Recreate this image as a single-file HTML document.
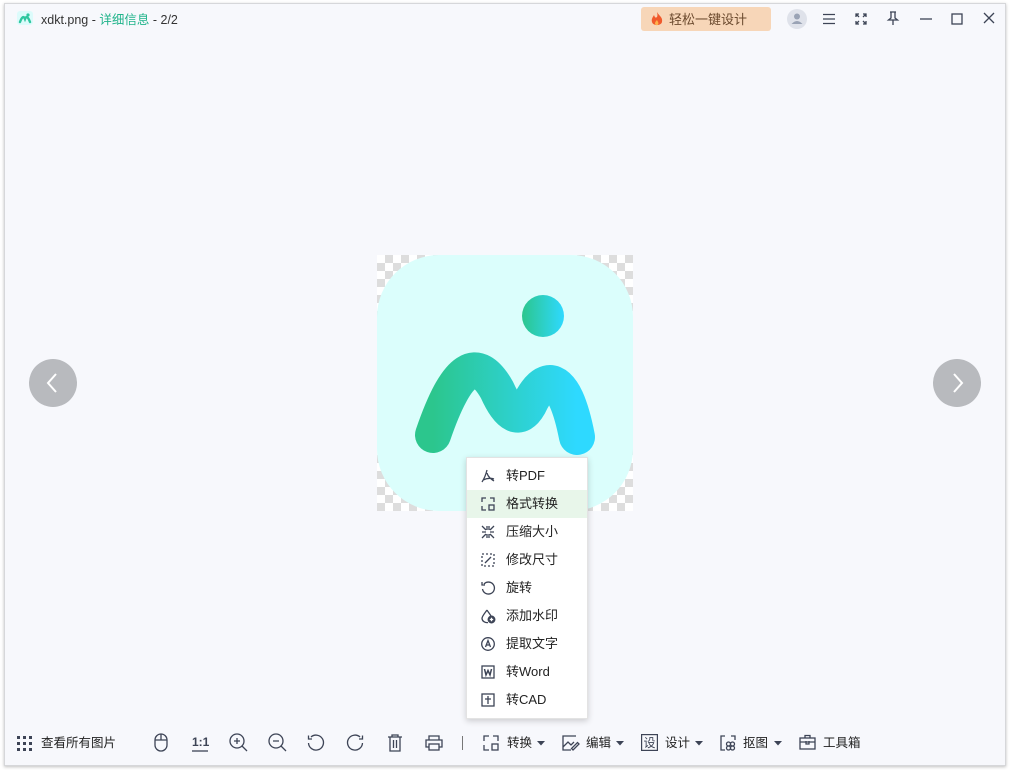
<!DOCTYPE html>
<html><head><meta charset="utf-8"><style>
*{margin:0;padding:0;box-sizing:border-box}
body{width:1010px;height:770px;background:#fff;font-family:"Liberation Sans","Noto Sans CJK SC",sans-serif;position:relative;overflow:hidden;color:#333}
#win{position:absolute;left:4px;top:3px;width:1002px;height:763px;background:#f7f8fc;border:1px solid #d6d7da;box-shadow:0 1px 3px rgba(0,0,0,.25)}
.a{position:absolute}
.t{font-size:13px;white-space:nowrap}
svg{position:absolute;overflow:visible}
.ic{stroke:#3d4456;fill:none;stroke-width:1.3}
.mi{position:absolute;left:0;width:120px;height:28px;font-size:13px;color:#222}
.mi span{position:absolute;left:39px;top:3px}
.mi svg{left:14px;top:7px}
.bt{top:732px;color:#222;font-size:12.5px}
</style></head><body>
<div id="win"></div>
<!-- title -->
<svg style="left:17px;top:11px" width="16" height="14" viewBox="0 0 16 14"><rect width="16" height="14" rx="3" fill="#dcfbfb"/><path d="M3 11 Q6 3 8 8 Q10 3 13 11" stroke="#2fc7a0" stroke-width="2.4" fill="none" stroke-linecap="round"/><circle cx="11" cy="4" r="1.6" fill="#2fc7a0"/></svg>
<div class="a t" style="left:41px;top:9px;color:#333;font-size:12.5px">xdkt.png - <span style="color:#1fb38a">详细信息</span> - 2/2</div>
<div class="a" style="left:641px;top:7px;width:130px;height:24px;background:#f7d6b8;border-radius:3px"></div>
<svg style="left:650px;top:11px" width="14" height="16" viewBox="0 0 14 16"><path d="M7 1 C9 5 13 6 12 11 C11 15 3 15 2 11 C1 8 3 6 4 4 C5 7 6 7 7 6 C8 4 7 2 7 1Z" fill="#f05a2c"/><path d="M7 9 C8 11 9 12 8 13.5 C7 15 5 14 5 12.5 C5 11 6 10 7 9Z" fill="#ffb14a"/></svg>
<div class="a t" style="left:669px;top:9px;color:#6b4a2e;font-size:13px">轻松一键设计</div>
<svg style="left:787px;top:9px" width="20" height="20" viewBox="0 0 20 20"><circle cx="10" cy="10" r="10" fill="#dfe2ea"/><circle cx="10" cy="7.5" r="3" fill="#9aa3b5"/><path d="M4.5 15 Q10 9 15.5 15Z" fill="#9aa3b5"/></svg>
<svg style="left:822px;top:13px" width="14" height="12" class="ic"><path d="M1 1.5H13M1 6H13M1 10.5H13"/></svg>
<svg style="left:855px;top:13px" width="12" height="12" class="ic"><path d="M1 4V1H4M8 1H11V4M11 8V11H8M4 11H1V8M1 1L4 4M11 1L8 4M11 11L8 8M1 11L4 8"/></svg>
<svg style="left:887px;top:11px" width="12" height="15" class="ic"><path d="M3 1H9M4 1V7L1.5 9H10.5L8 7V1M6 9V14"/></svg>
<svg style="left:920px;top:18px" width="12" height="2" class="ic"><path d="M0 1H12"/></svg>
<svg style="left:951px;top:13px" width="12" height="12" class="ic"><rect x="1" y="1" width="10" height="10"/></svg>
<svg style="left:983px;top:12px" width="12" height="12" class="ic"><path d="M1 1L11 11M11 1L1 11"/></svg>
<!-- nav arrows -->
<div class="a" style="left:29px;top:359px;width:48px;height:48px;border-radius:50%;background:#b8babe"></div>
<svg style="left:45px;top:372px" width="14" height="22"><path d="M11 2L3 11L11 20" stroke="#fff" stroke-width="2" fill="none"/></svg>
<div class="a" style="left:933px;top:359px;width:48px;height:48px;border-radius:50%;background:#b8babe"></div>
<svg style="left:951px;top:372px" width="14" height="22"><path d="M3 2L11 11L3 20" stroke="#fff" stroke-width="2" fill="none"/></svg>
<!-- image -->
<div class="a" style="left:377px;top:255px;width:256px;height:256px;background-color:#fff;background-image:linear-gradient(45deg,#ddd 25%,transparent 25%,transparent 75%,#ddd 75%),linear-gradient(45deg,#ddd 25%,transparent 25%,transparent 75%,#ddd 75%);background-size:16px 16px;background-position:0 0,8px 8px"></div>
<svg style="left:377px;top:255px" width="256" height="256" viewBox="0 0 256 256">
<defs><linearGradient id="g" x1="0" x2="1"><stop offset="0" stop-color="#2cc68d"/><stop offset="1" stop-color="#2ed9ff"/></linearGradient></defs>
<rect x="0" y="0" width="256" height="256" rx="62" fill="#dbfefc"/>
<circle cx="166" cy="61" r="21" fill="url(#g)"/>
<path d="M56 180 C80 110 100 100 120 135 Q138 175 152 150 C167 118 187 115 200 182" stroke="url(#g)" stroke-width="36" fill="none" stroke-linecap="round" stroke-linejoin="round"/>
</svg>
<!-- menu -->
<div class="a" style="left:466px;top:457px;width:122px;height:262px;background:#fff;border:1px solid #e3e3e3;box-shadow:0 2px 6px rgba(0,0,0,.18)">
<div class="mi" style="top:4px"><svg width="14" height="14" class="ic"><path d="M6 1C5 5 3 10 1 13M6 4C7 8 10 10 13 12M2 11C6 9 10 9 13 10"/></svg><span>转PDF</span></div>
<div class="mi" style="top:32px;background:#e8f6ea"><svg width="14" height="14" class="ic"><path d="M1 5V1H5M1 9V13H5M9 1H13V5"/><rect x="8" y="8" width="5" height="5"/></svg><span>格式转换</span></div>
<div class="mi" style="top:60px"><svg width="14" height="14" class="ic"><path d="M1 1L5 5M13 1L9 5M1 13L5 9M13 13L9 9M6 1V5M8 1V5M6 9V13M8 9V13M1 7H5M9 7H13"/></svg><span>压缩大小</span></div>
<div class="mi" style="top:88px"><svg width="14" height="14" class="ic"><rect x="1" y="1" width="12" height="12" stroke-dasharray="2 2"/><path d="M4 10L10 4"/></svg><span>修改尺寸</span></div>
<div class="mi" style="top:116px"><svg width="14" height="14" class="ic"><path d="M3 3A6 6 0 1 1 1.5 8M1 1V4H4"/></svg><span>旋转</span></div>
<div class="mi" style="top:144px"><svg width="14" height="14" class="ic"><path d="M6 1C4 4 1 7 1 9.5A5 4.5 0 0 0 7 13.5M6 1C7 3 9 5 10 7"/><circle cx="10.5" cy="10.5" r="3.3" fill="#3d4456"/><path d="M8.8 10.5H12.2M10.5 8.8V12.2" stroke="#fff"/></svg><span>添加水印</span></div>
<div class="mi" style="top:172px"><svg width="14" height="14" class="ic"><circle cx="7" cy="7" r="6.3"/><path d="M4.5 10L7 3.5L9.5 10M5.3 8H8.7"/></svg><span>提取文字</span></div>
<div class="mi" style="top:200px"><svg width="14" height="14" class="ic"><rect x="1" y="1" width="12" height="12"/><path d="M3.5 4L5 10L7 5.5L9 10L10.5 4" stroke-width="1.5"/></svg><span>转Word</span></div>
<div class="mi" style="top:228px"><svg width="14" height="14" class="ic"><rect x="1" y="1" width="12" height="12"/><path d="M7 3V11M4 6H10"/></svg><span>转CAD</span></div>
</div>
<!-- bottom toolbar -->
<svg style="left:17px;top:736px" width="15" height="15"><g fill="#3d4456"><rect x="0" y="0" width="3" height="3"/><rect x="6" y="0" width="3" height="3"/><rect x="12" y="0" width="3" height="3"/><rect x="0" y="6" width="3" height="3"/><rect x="6" y="6" width="3" height="3"/><rect x="12" y="6" width="3" height="3"/><rect x="0" y="12" width="3" height="3"/><rect x="6" y="12" width="3" height="3"/><rect x="12" y="12" width="3" height="3"/></g></svg>
<div class="a t bt" style="left:41px">查看所有图片</div>
<svg style="left:154px;top:733px" width="14" height="19" class="ic"><rect x="1" y="1" width="12" height="17" rx="6"/><path d="M7 1V7M1 7H13"/></svg>
<svg style="left:191px;top:734px" width="18" height="18"><text x="1" y="12" font-size="12" font-weight="bold" fill="#3d4456" font-family="Liberation Sans">1:1</text><path d="M1 17H17" stroke="#3d4456" stroke-width="1.3"/></svg>
<svg style="left:229px;top:733px" width="20" height="20" class="ic"><circle cx="8" cy="8" r="7"/><path d="M13 13L18 18M5 8H11M8 5V11"/></svg>
<svg style="left:268px;top:733px" width="20" height="20" class="ic"><circle cx="8" cy="8" r="7"/><path d="M13 13L18 18M5 8H11"/></svg>
<svg style="left:307px;top:734px" width="18" height="18" class="ic"><path d="M4 3A7.5 7.5 0 1 1 1.5 9M1.5 1.5V5H5"/></svg>
<svg style="left:346px;top:734px" width="18" height="18" class="ic"><path d="M14 3A7.5 7.5 0 1 0 16.5 9M16.5 1.5V5H13"/></svg>
<svg style="left:387px;top:734px" width="16" height="18" class="ic"><path d="M1 3H15M5 3V1H11V3M3 3V17H13V3M6.5 6V14M9.5 6V14"/></svg>
<svg style="left:425px;top:735px" width="18" height="16" class="ic"><path d="M4 5V1H14V5M4 12H1V5H17V12H14"/><rect x="4" y="9" width="10" height="6"/></svg>
<div class="a" style="left:462px;top:736px;width:1px;height:14px;background:#777"></div>
<svg style="left:483px;top:735px" width="16" height="16" class="ic"><path d="M1 6V1H6M1 10V15H6M10 1H15V6"/><rect x="9" y="9" width="6" height="6"/></svg>
<div class="a t bt" style="left:507px">转换</div>
<svg style="left:537px;top:741px" width="8" height="5"><path d="M0 0H8L4 4.5Z" fill="#3d4456"/></svg>
<svg style="left:562px;top:735px" width="18" height="16" class="ic"><path d="M14 1H1V15H9M1 12L6 7L9 10L12 7"/><path d="M11 15L17 9L15.5 7.5L9.5 13.5Z"/></svg>
<div class="a t bt" style="left:586px">编辑</div>
<svg style="left:616px;top:741px" width="8" height="5"><path d="M0 0H8L4 4.5Z" fill="#3d4456"/></svg>
<svg style="left:641px;top:734px" width="17" height="17"><rect x="0.6" y="0.6" width="15.8" height="15.8" fill="none" stroke="#3d4456" stroke-width="1.2"/><text x="2.5" y="13" font-size="12" fill="#3d4456" font-family="Noto Sans CJK SC">设</text></svg>
<div class="a t bt" style="left:665px">设计</div>
<svg style="left:695px;top:741px" width="8" height="5"><path d="M0 0H8L4 4.5Z" fill="#3d4456"/></svg>
<svg style="left:720px;top:735px" width="16" height="16" class="ic"><path d="M5 1H1V15H5M11 1H15V5"/><circle cx="8.5" cy="9" r="2"/><circle cx="12.5" cy="9" r="2"/><circle cx="8.5" cy="13" r="2"/><circle cx="12.5" cy="13" r="2"/></svg>
<div class="a t bt" style="left:743px">抠图</div>
<svg style="left:774px;top:741px" width="8" height="5"><path d="M0 0H8L4 4.5Z" fill="#3d4456"/></svg>
<svg style="left:799px;top:734px" width="17" height="17" class="ic"><path d="M6 4V1.5H11V4"/><rect x="1" y="4" width="15" height="11"/><path d="M1 8H16M7 7V10H10V7"/></svg>
<div class="a t bt" style="left:823px">工具箱</div>
</body></html>
